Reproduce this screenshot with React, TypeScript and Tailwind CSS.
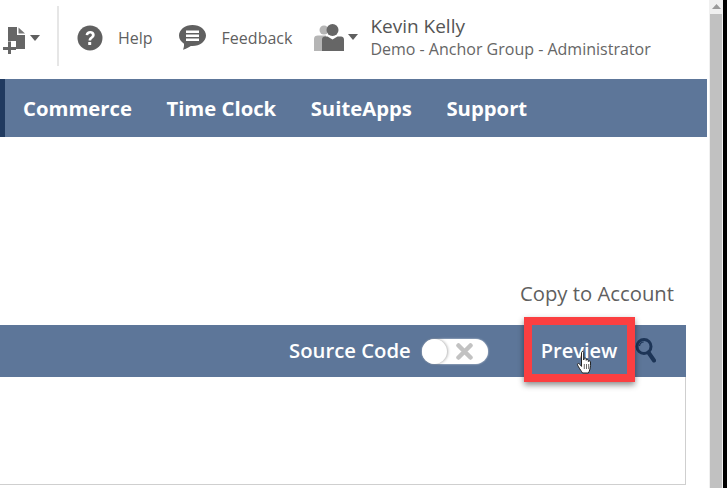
const font = "font-['Open_Sans',sans-serif]";

function Caret({ className }: { className: string }) {
  return (
    <svg className={className} width="10" height="6" viewBox="0 0 10 6">
      <path d="M0 0h10L5 6z" fill="#5f5f5f" />
    </svg>
  );
}

function NewIcon() {
  return (
    <svg width="22" height="27" viewBox="0 0 22 27" className="block shrink-0">
      <path d="M5 0h9v8h8v14H13V14H5z" fill="#666" />
      <path d="M15.500 0.500 22 6.500h-6.500z" fill="#777" />
      <path d="M5 14.500h3v5.500h5v3H8v4H5v-4H0v-3h5z" fill="#666" />
    </svg>
  );
}

function HelpIcon() {
  return (
    <svg width="26" height="26" viewBox="0 0 26 26" className="block">
      <circle cx="13" cy="13" r="12.500" fill="#606060" />
      <path d="M8.600 10c.3-2.600 2.200-4 4.600-4 2.600 0 4.500 1.500 4.500 3.800 0 1.800-1 2.700-2.200 3.600-.9.700-1.300 1.100-1.300 2.100h-2.600c0-1.800.6-2.700 1.800-3.600 1-.7 1.500-1.200 1.500-2 0-.9-.7-1.500-1.700-1.500-1.100 0-1.800.7-2 1.800z" fill="#fff" />
      <rect x="11.200" y="17" width="3" height="3" rx="0.500" fill="#fff" />
    </svg>
  );
}

function FeedbackIcon() {
  return (
    <svg width="27" height="25" viewBox="0 0 27 25" className="block">
      <path d="M13.500 0C6 0 0 4.700 0 10.500c0 3.400 2 6.300 5 8.200.2 2.200-.2 4-1 6 3.200-.8 5.800-2.600 7.800-3.800.6.100 1.100.1 1.700.1C21 20.900 27 16.300 27 10.500S21 0 13.500 0z" fill="#606060" />
      <rect x="7" y="5.500" width="13" height="2.500" fill="#fff" />
      <rect x="7" y="9.500" width="13" height="2.500" fill="#fff" />
      <rect x="7" y="13.500" width="13" height="2.500" fill="#fff" />
    </svg>
  );
}

function RolesIcon() {
  return (
    <svg width="30" height="27" viewBox="0 0 30 27" className="block">
      <circle cx="10" cy="6" r="4.500" fill="#b5b5b5" />
      <path d="M0 27V15c0-2.500 1.500-3.500 4-3.500h8V27z" fill="#b5b5b5" />
      <circle cx="18.500" cy="6" r="6" fill="#666" />
      <path d="M8 27V15.500c0-2 1.300-3 3-3h2.500l5 3 5-3H27c1.700 0 3 1 3 3V27z" fill="#666" />
    </svg>
  );
}

function HandCursor() {
  return (
    <svg width="20" height="24" viewBox="0 0 17 24" className="block">
      <path
        d="M5 1.500c0-1.300 2.200-1.300 2.200 0V9l.3-1.300c.3-1 2-1 2.200.1v1.500c.2-1 2-1 2.200.2v1c.3-.9 2-.8 2.100.4.200 2.500.1 5-.5 7.100-.4 1.600-1 3-1.600 4H6c-1-1.700-2.500-3.600-4-6.200-.7-1.300-1.300-2.300-.9-3 .5-.7 1.600-.3 2.300.6l1.600 2z"
        fill="#fff"
        stroke="#222"
        strokeWidth="1"
        strokeLinejoin="round"
      />
      <path d="M7.800 13v5M10 13v5M12.200 13v5" stroke="#444" strokeWidth="0.800" />
    </svg>
  );
}

function SearchIcon() {
  return (
    <svg width="21" height="26" viewBox="0 0 21 25" className="block">
      <circle cx="9" cy="9" r="7" fill="none" stroke="#1d3557" strokeWidth="3" />
      <path d="M4.500 8.500c.3-2.200 2-3.800 4.200-4" fill="none" stroke="#1d3557" strokeWidth="1.200" />
      <path d="M13.500 15 19 23" stroke="#1d3557" strokeWidth="4" strokeLinecap="round" />
    </svg>
  );
}

function Toggle() {
  return (
    <div className="relative h-[25px] w-[66px] rounded-full bg-white shadow-[0_0_2px_rgba(255,255,255,0.8)]">
      <div className="absolute left-0 top-0 h-[25px] w-[25px] rounded-full bg-white shadow-[1px_0_3px_rgba(0,0,0,0.3)]" />
      <svg className="absolute left-[34px] top-[4px]" width="17" height="17" viewBox="0 0 17 17">
        <path d="M2.500 2.500l12 12M14.500 2.500l-12 12" stroke="#c2c2c2" strokeWidth="4.500" strokeLinecap="round" />
      </svg>
    </div>
  );
}

export default function App() {
  return (
    <div className={`${font} flex h-[488px] w-[727px] overflow-hidden bg-white`}>
      <main className="flex w-[709px] shrink-0 flex-col">
        <header className="flex h-[79px] shrink-0 pt-[6px]">
          <div className="flex h-[60px] w-[59px] shrink-0 items-start gap-[5px] border-r-2 border-[#e6e6e6] pl-[3px] pt-[21px]">
            <NewIcon />
            <Caret className="mt-[8px]" />
          </div>
          <div className="flex h-[60px] items-center pt-[3px] pl-[18px] text-[#5f5f5f]">
            <HelpIcon />
            <span className="ml-[15px] text-[16px]">Help</span>
            <div className="ml-[26px]"><FeedbackIcon /></div>
            <span className="ml-[16px] text-[16px]">Feedback</span>
            <div className="ml-[22px]"><RolesIcon /></div>
            <Caret className="ml-[4px] mb-[2px]" />
            <div className="ml-[12px] flex flex-col">
              <span className="text-[19px] leading-[24px] text-[#555]">Kevin Kelly</span>
              <span className="text-[16px] leading-[23px] text-[#666]">Demo - Anchor Group - Administrator</span>
            </div>
          </div>
        </header>
        <nav className="flex h-[58px] w-[707px] shrink-0 items-center gap-[34.500px] border-l-[5px] border-[#203a60] bg-[#5d7699] pl-[18px] text-[20.300px] font-bold text-white">
          <span>Commerce</span>
          <span>Time Clock</span>
          <span>SuiteApps</span>
          <span>Support</span>
        </nav>
        <div className="flex h-[188px] shrink-0 items-end justify-end pb-[19px] pr-[35px] text-[20.300px] leading-[26px] text-[#5f5f5f]">
          Copy to Account
        </div>
        <div className="flex h-[52px] w-[686px] shrink-0 items-center bg-[#5d7699] pl-[289px] text-white">
          <span className="pb-[2px] text-[20.300px] font-semibold">Source Code</span>
          <div className="ml-[11px]"><Toggle /></div>
          <div className="relative z-10 ml-[36px] mb-[3px] flex h-[65px] w-[111px] shrink-0 items-center border-[8px] border-[#fb3f41] pl-[9px] pt-[3px] text-[20px] font-semibold shadow-[0_3px_6px_rgba(0,0,0,0.45)]">
            Preview
            <div className="absolute left-[43px] top-[26px]"><HandCursor /></div>
          </div>
          <div className="pb-[2px]"><SearchIcon /></div>
        </div>
        <div className="h-[108px] w-[686px] shrink-0 border-r border-b border-[#cfcfcf]" />
      </main>
      <aside className="flex w-[14px] shrink-0 flex-col items-center bg-[#f0f0f0]">
        <svg className="mt-[4px]" width="9" height="5" viewBox="0 0 9 5">
          <path d="M0 5 4.500 0 9 5z" fill="#9a9a9a" />
        </svg>
        <div className="mt-[5px] w-[12px] flex-1 bg-[#c1c1c1]" />
      </aside>
      <div className="flex-1 bg-black" />
    </div>
  );
}
